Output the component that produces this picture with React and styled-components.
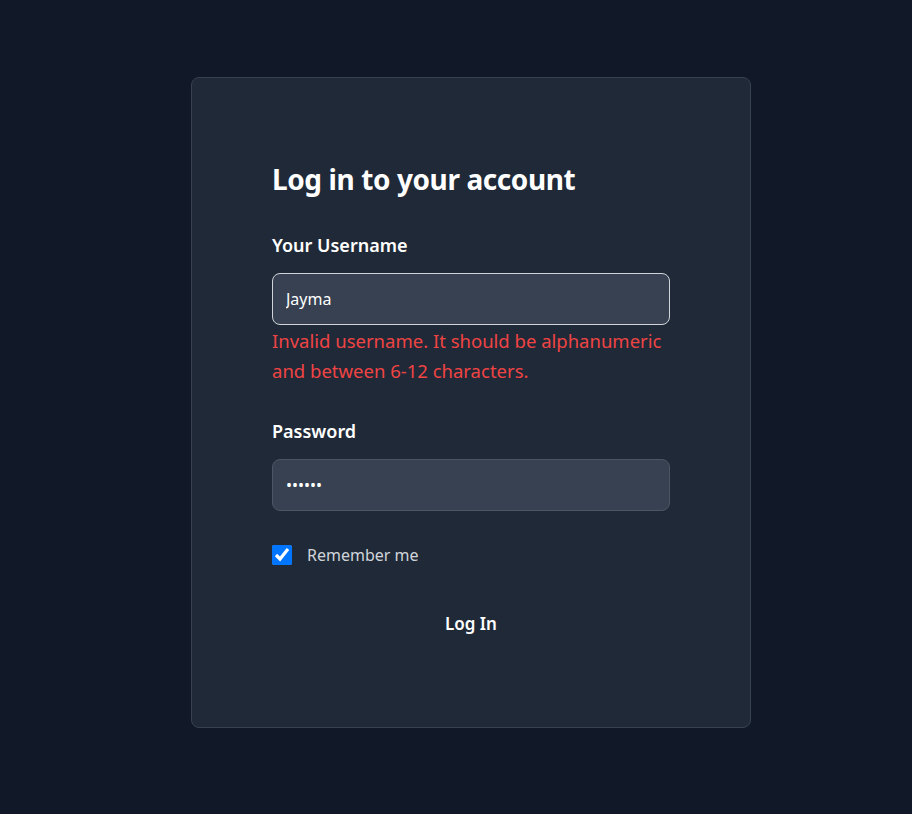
import React, { useState } from 'react';
import styled, { createGlobalStyle } from 'styled-components';

const GlobalStyle = createGlobalStyle`
  html, body {
    margin: 0;
    padding: 0;
    background: #111827;
    font-family: "Noto Sans", "Open Sans", sans-serif;
  }
  * {
    box-sizing: border-box;
  }
`;

const Page = styled.div`
  min-height: 814px;
  display: flex;
  justify-content: center;
  padding: 77px 0 0 30px;
`;

const Card = styled.form`
  width: 560px;
  height: 651px;
  background: #1f2937;
  border: 1px solid #374151;
  border-radius: 8px;
  padding: 80px 80px;
  display: flex;
  flex-direction: column;
`;

const Title = styled.h1`
  margin: 3px 0 34px;
  font-size: 28px;
  line-height: 36px;
  font-weight: 700;
  color: #ffffff;
  letter-spacing: -0.4px;
`;

const Field = styled.div`
  display: flex;
  flex-direction: column;
  margin-bottom: ${(props) => props.$mb || 0}px;
`;

const Label = styled.label`
  font-size: 18px;
  line-height: 28px;
  font-weight: 600;
  color: #ffffff;
  margin-bottom: 14px;
`;

const Input = styled.input`
  height: 52px;
  width: 100%;
  background: #374151;
  border: 1px solid ${(props) => (props.$invalid ? '#d1d5db' : '#4b5563')};
  border-radius: 8px;
  padding: 0 13px;
  color: #ffffff;
  font-family: inherit;
  font-size: 16px;
  outline: none;
`;

const ErrorText = styled.p`
  margin: 1px 0 0;
  font-size: 18.5px;
  line-height: 30px;
  color: #ef4444;
`;

const CheckRow = styled.label`
  display: flex;
  align-items: center;
  gap: 15px;
  margin-top: 34px;
  color: #d1d5db;
  font-size: 16px;
  line-height: 20px;
`;

const CheckBox = styled.input`
  width: 20px;
  height: 20px;
  margin: 0;
  accent-color: #0075ff;
`;

const SubmitButton = styled.button`
  margin-top: 35px;
  align-self: center;
  background: transparent;
  border: none;
  color: #ffffff;
  font-family: inherit;
  font-size: 17px;
  line-height: 28px;
  font-weight: 600;
  padding: 10px 24px;
  cursor: pointer;
`;

const App = () => {
  const [username, setUsername] = useState('Jayma');
  const [password, setPassword] = useState('123456');
  const [remember, setRemember] = useState(true);

  return (
    <>
      <GlobalStyle />
      <Page>
        <Card onSubmit={(e) => e.preventDefault()}>
          <Title>Log in to your account</Title>
          <Field $mb={31}>
            <Label htmlFor="username">Your Username</Label>
            <Input
              id="username"
              $invalid
              value={username}
              onChange={(e) => setUsername(e.target.value)}
            />
            <ErrorText>
              Invalid username. It should be alphanumeric and between 6-12 characters.
            </ErrorText>
          </Field>
          <Field>
            <Label htmlFor="password">Password</Label>
            <Input
              id="password"
              type="password"
              value={password}
              onChange={(e) => setPassword(e.target.value)}
            />
          </Field>
          <CheckRow>
            <CheckBox
              type="checkbox"
              checked={remember}
              onChange={(e) => setRemember(e.target.checked)}
            />
            Remember me
          </CheckRow>
          <SubmitButton type="submit">Log In</SubmitButton>
        </Card>
      </Page>
    </>
  );
};

export default App;
